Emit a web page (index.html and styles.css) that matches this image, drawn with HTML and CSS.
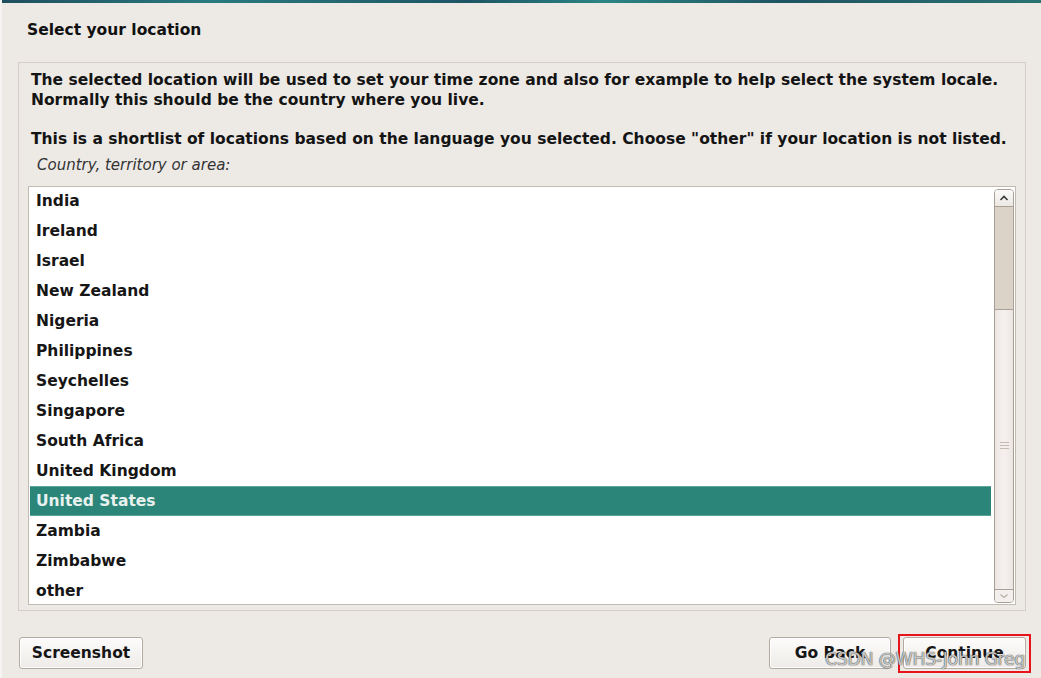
FILE: index.html
```html
<!DOCTYPE html>
<html>
<head>
<meta charset="utf-8">
<link rel="stylesheet" href="styles.css">
</head>
<body>
<div class="topbar"></div>
<div class="page">
  <h1 class="title">Select your location</h1>
  <div class="panel">
    <p class="desc">The selected location will be used to set your time zone and also for example to help select the system locale.<br>Normally this should be the country where you live.</p>
    <p class="desc second">This is a shortlist of locations based on the language you selected. Choose "other" if your location is not listed.</p>
    <p class="label">Country, territory or area:</p>
    <div class="listbox">
      <div class="rows">
        <div class="row">India</div>
        <div class="row">Ireland</div>
        <div class="row">Israel</div>
        <div class="row">New Zealand</div>
        <div class="row">Nigeria</div>
        <div class="row">Philippines</div>
        <div class="row">Seychelles</div>
        <div class="row">Singapore</div>
        <div class="row">South Africa</div>
        <div class="row">United Kingdom</div>
        <div class="row selected">United States</div>
        <div class="row">Zambia</div>
        <div class="row">Zimbabwe</div>
        <div class="row">other</div>
      </div>
      <div class="scrollbar">
        <div class="sb-up"><svg width="10" height="6" viewBox="0 0 10 6"><path d="M1.5 5 L5 1.5 L8.5 5" fill="none" stroke="#3a3a3a" stroke-width="1.6"/></svg></div>
        <div class="sb-thumb"></div>
        <div class="sb-track"><div class="grip"><span></span><span></span><span></span></div></div>
        <div class="sb-down"><svg width="10" height="6" viewBox="0 0 10 6"><path d="M1.5 1.5 L5 4.5 L8.5 1.5" fill="none" stroke="#b5aea6" stroke-width="1.2"/></svg></div>
      </div>
    </div>
  </div>
  <div class="buttons">
    <button class="btn screenshot">Screenshot</button>
    <div class="spacer"></div>
    <button class="btn goback">Go Back</button>
    <div class="highlight"><button class="btn continue">Continue</button></div>
  </div>
  <div class="watermark">CSDN @WHS-John Greg</div>
</div>
</body>
</html>
```
FILE: styles.css
```css
* { box-sizing: border-box; }
html, body { margin: 0; padding: 0; }
body {
  width: 1041px;
  height: 678px;
  overflow: hidden;
  background: #edeae6;
  font-family: "DejaVu Sans", "Liberation Sans", sans-serif;
  color: #161616;
  border-left: 2px solid #f6f4f2;
}
.topbar {
  height: 3px;
  background: linear-gradient(to right, #1f4f5e 0%, #2a7a80 20%, #1e5566 45%, #2b8584 58%, #1f5462 75%, #2a7272 100%);
}
.page {
  position: relative;
  padding: 0 15px 0 16px;
}
.title {
  margin: 0;
  padding-top: 18px;
  font-size: 15.5px;
  line-height: 18px;
  font-weight: bold;
  padding-left: 9px;
  color: #111;
}
.panel {
  margin-top: 23px;
  border: 1px solid #d4cec7;
  padding: 7px 9px 5px 9px;
}
.desc {
  margin: 0 0 0 3px;
  font-size: 15.5px;
  line-height: 20px;
  font-weight: bold;
  color: #141414;
  white-space: nowrap;
}
.desc.second { margin-top: 19px; }
.label {
  margin: 6px 0 0 9px;
  font-size: 15px;
  line-height: 20px;
  font-style: italic;
  color: #333;
}
.listbox {
  margin-top: 11px;
  height: 419px;
  border: 1px solid #c2bbb1;
  background: #fff;
  display: flex;
  padding: 1px 0 1px 1px;
  overflow: hidden;
}
.rows {
  flex: 1;
  margin-top: -2px;
}
.row {
  height: 30px;
  line-height: 30px;
  padding-left: 6px;
  font-size: 15.5px;
  font-weight: bold;
  color: #161616;
}
.row.selected {
  background: #2b8679;
  color: #e9f1ef;
  border-top: 1px solid #5aa69a;
  line-height: 28px;
  border-bottom: 1px solid #5aa69a;
}
.scrollbar {
  width: 20px;
  margin-left: 3px;
  margin-right: 1px;
  margin-top: 1px;
  display: flex;
  flex-direction: column;
  border: 1px solid #a8a094;
  border-radius: 4px;
  overflow: hidden;
}
.sb-up {
  height: 17px;
  background: linear-gradient(#fbfaf9, #ece8e4);
  border-bottom: 1px solid #a8a094;
  display: flex;
  align-items: center;
  justify-content: center;
}
.sb-thumb {
  height: 103px;
  background: #dcd3c8;
  border-bottom: 1px solid #a8a094;
}
.sb-track {
  flex: 1;
  background: linear-gradient(to right, #ece6e3, #f6f1ef, #ece6e3);
  border-bottom: 1px solid #a8a094;
  display: flex;
  align-items: center;
  justify-content: center;
}
.grip { display: flex; flex-direction: column; gap: 2px; margin-top: -8px; }
.grip span { display: block; width: 9px; height: 1px; background: #c4bbb2; }
.sb-down {
  height: 12px;
  background: #f3efec;
  display: flex;
  align-items: center;
  justify-content: center;
}
.buttons {
  display: flex;
  align-items: center;
  gap: 12px;
  margin-top: 26px;
}
.spacer { flex: 1; }
.btn {
  height: 32px;
  border: 1px solid #b3aba1;
  border-radius: 3px;
  background: linear-gradient(#fdfcfb, #eeebe7);
  font-family: "DejaVu Sans", "Liberation Sans", sans-serif;
  font-size: 15.5px;
  font-weight: bold;
  color: #161616;
  padding: 0;
  box-shadow: inset 0 0 0 1px #fff;
}
.btn.screenshot { width: 124px; margin-left: 1px; }
.btn.goback { width: 122px; }
.highlight {
  border: 2px solid #e8141b;
  padding: 1px 3px 2px 3px;
  margin: -3px -5px -4px -5px;
  display: flex;
}
.btn.continue { width: 123px; }
.watermark {
  position: absolute;
  left: 823px;
  top: 646px;
  font-family: "DejaVu Sans", sans-serif;
  font-size: 17.5px;
  color: rgba(255, 255, 255, 0.7);
  text-shadow: 0 0 1px #444, 0 0 1px #444;
  letter-spacing: -0.4px;
  white-space: nowrap;
}
```
